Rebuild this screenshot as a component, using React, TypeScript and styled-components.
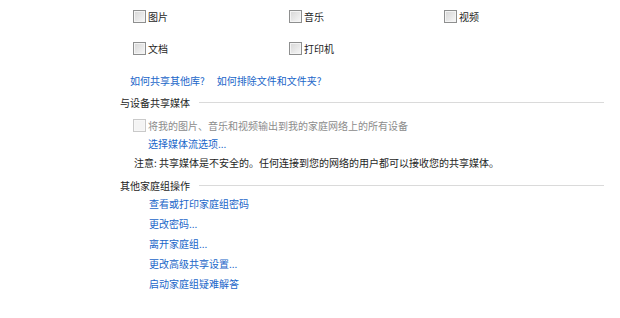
import styled, { createGlobalStyle } from 'styled-components';

const GlobalStyle = createGlobalStyle`
  html, body {
    margin: 0;
    padding: 0;
    background: #fff;
  }
  body {
    font-family: "Noto Sans CJK SC", "Noto Sans", sans-serif;
    font-size: 10px;
    color: #1e1e1e;
  }
`;

const Page = styled.div`
  display: flex;
  flex-direction: column;
  width: 484px;
  padding-left: 120px;
`;

const CheckGrid = styled.div`
  display: grid;
  grid-template-columns: 156px 155px 100px;
  grid-auto-rows: 20px;
  row-gap: 12px;
  margin: 6px 0 0 13px;
`;

const CheckItem = styled.label<{ $disabled?: boolean }>`
  display: flex;
  align-items: center;
  gap: 2px;
  height: 16px;
  align-self: center;
  color: ${(p) => (p.$disabled ? '#8c8c8c' : '#1e1e1e')};
  white-space: nowrap;
`;

const Box = styled.span<{ $disabled?: boolean }>`
  box-sizing: border-box;
  width: 13px;
  height: 13px;
  flex: none;
  border: 1px solid ${(p) => (p.$disabled ? '#c9c9c9' : '#8e8f8f')};
  box-shadow: inset 0 0 0 1px ${(p) => (p.$disabled ? '#f7f7f7' : '#f4f4f4')};
  background: ${(p) =>
    p.$disabled
      ? '#f4f4f4'
      : 'linear-gradient(135deg, #d6d6d6 0%, #e8e8e8 55%, #f8f8f8 100%)'};
`;

const Link = styled.a`
  color: #1a66c9;
  text-decoration: none;
  cursor: pointer;
  white-space: nowrap;
`;

const HelpLinks = styled.div`
  display: flex;
  align-items: center;
  gap: 12px;
  height: 16px;
  margin: 14px 0 0 10px;
`;

const SectionHeader = styled.div<{ $top: number }>`
  display: flex;
  align-items: center;
  gap: 9px;
  height: 16px;
  margin-top: ${(p) => p.$top}px;
  white-space: nowrap;

  &::after {
    content: '';
    flex: 1;
    height: 1px;
    background: #dadada;
  }
`;

const Indented = styled.div<{ $left: number; $top: number }>`
  display: flex;
  align-items: center;
  height: 16px;
  margin: ${(p) => p.$top}px 0 0 ${(p) => p.$left}px;
  white-space: nowrap;
`;

const ActionList = styled.div`
  display: flex;
  flex-direction: column;
  margin: 0 0 0 29px;
`;

const ActionRow = styled.div`
  display: flex;
  align-items: center;
  height: 20px;
`;

const libraries = ['图片', '音乐', '视频', '文档', '打印机'];

const actions = [
  '查看或打印家庭组密码',
  '更改密码...',
  '离开家庭组...',
  '更改高级共享设置...',
  '启动家庭组疑难解答',
];

export default function App() {
  return (
    <>
      <GlobalStyle />
      <Page>
        <CheckGrid>
          {libraries.map((name) => (
            <CheckItem key={name}>
              <Box />
              {name}
            </CheckItem>
          ))}
        </CheckGrid>

        <HelpLinks>
          <Link>如何共享其他库?</Link>
          <Link>如何排除文件和文件夹?</Link>
        </HelpLinks>

        <SectionHeader $top={6}>与设备共享媒体</SectionHeader>

        <Indented $left={13} $top={7}>
          <CheckItem $disabled>
            <Box $disabled />
            将我的图片、音乐和视频输出到我的家庭网络上的所有设备
          </CheckItem>
        </Indented>
        <Indented $left={28} $top={2}>
          <Link>选择媒体流选项...</Link>
        </Indented>
        <Indented $left={14} $top={3}>
          注意: 共享媒体是不安全的。任何连接到您的网络的用户都可以接收您的共享媒体。
        </Indented>

        <SectionHeader $top={7}>其他家庭组操作</SectionHeader>

        <ActionList>
          {actions.map((a) => (
            <ActionRow key={a}>
              <Link>{a}</Link>
            </ActionRow>
          ))}
        </ActionList>
      </Page>
    </>
  );
}
